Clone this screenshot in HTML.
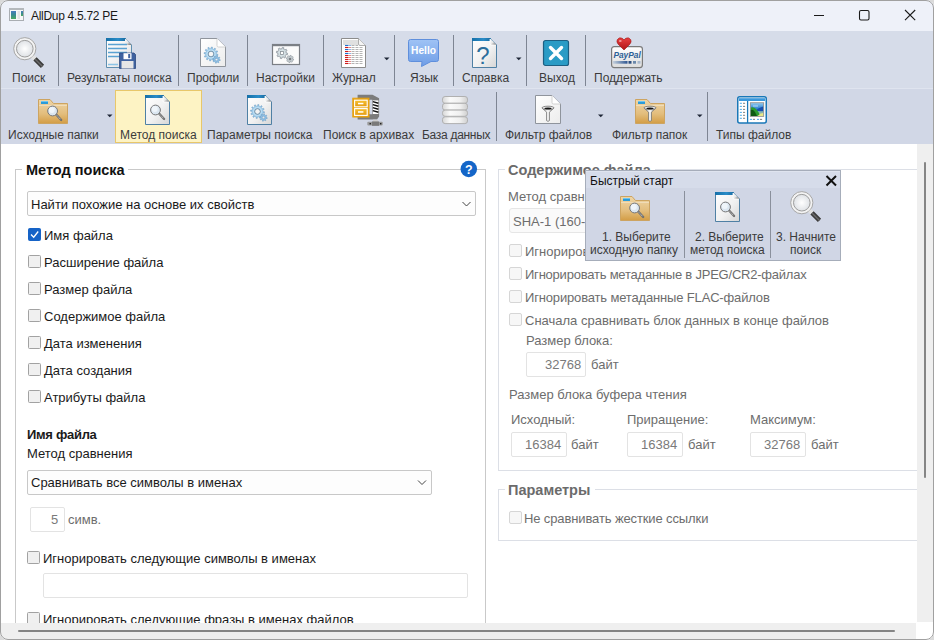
<!DOCTYPE html>
<html><head><meta charset="utf-8">
<style>
*{box-sizing:border-box;margin:0;padding:0}
html,body{width:934px;height:640px;overflow:hidden;background:#dadada}
body{font-family:"Liberation Sans",sans-serif;font-size:12px;color:#1a1a1a;position:relative}
.a{position:absolute}
.t{position:absolute;white-space:nowrap;line-height:1}
#win{position:absolute;left:0;top:0;width:934px;height:640px;border-radius:8px;overflow:hidden;background:#fff}
#frame{position:absolute;left:0;top:0;width:934px;height:640px;border:1px solid #a0a0a0;border-radius:8px;pointer-events:none}
#title{position:absolute;left:0;top:0;width:934px;height:31px;background:#eef1f9}
#tb1{position:absolute;left:0;top:31px;width:934px;height:57px;background:#d6dce9}
#tbline{position:absolute;left:0;top:88px;width:934px;height:1px;background:#dfe4ef}
#tb2{position:absolute;left:0;top:89px;width:934px;height:55px;background:#d1d7e6}
.sep{position:absolute;width:1px;background:#7e8593}
.tbt{position:absolute;white-space:nowrap;line-height:1;font-size:12px;color:#3b3b3b}
.dd{position:absolute;width:0;height:0;border-left:3px solid transparent;border-right:3px solid transparent;border-top:3px solid #333}
.ct{position:absolute;white-space:nowrap;line-height:1;font-size:13px;color:#1a1a1a}
.gt{position:absolute;white-space:nowrap;line-height:1;font-size:13px;color:#6d6d6d}
.cb{position:absolute;width:13px;height:13px;border:1px solid #a2a2a2;border-radius:1.5px;background:#f0f0f0}
.cbd{position:absolute;width:13px;height:13px;border:1px solid #d6d6d6;border-radius:2px;background:#f7f7f7}
.combo{position:absolute;border:1px solid #c8c8c8;border-radius:2px;background:#fdfdfd}
.combod{position:absolute;border:1px solid #e6e6e6;border-radius:3px;background:#fafafa}
.inp{position:absolute;border:1px solid #e3e3e3;border-radius:2px;background:#fff}
</style></head><body>
<div id="win">
 <div id="title"></div>
 <div id="tb1"></div>
 <div id="tbline"></div>
 <div id="tb2"></div>

 <!-- title -->
 <div class="t" style="left:31px;top:10px;font-size:12px;color:#1a1a1a;letter-spacing:-0.3px">AllDup 4.5.72 PE</div>

 <!-- toolbar row 1 separators -->
 <div class="sep" style="left:58px;top:35px;height:51px"></div>
 <div class="sep" style="left:178px;top:35px;height:51px"></div>
 <div class="sep" style="left:247px;top:35px;height:51px"></div>
 <div class="sep" style="left:323px;top:35px;height:51px"></div>
 <div class="sep" style="left:394px;top:35px;height:51px"></div>
 <div class="sep" style="left:453px;top:35px;height:51px"></div>
 <div class="sep" style="left:526px;top:35px;height:51px"></div>
 <div class="sep" style="left:585px;top:35px;height:51px"></div>

 <div class="tbt" style="left:12px;top:72px">Поиск</div>
 <div class="tbt" style="left:67px;top:72px">Результаты поиска</div>
 <div class="tbt" style="left:187px;top:72px">Профили</div>
 <div class="tbt" style="left:256px;top:72px">Настройки</div>
 <div class="tbt" style="left:332px;top:72px">Журнал</div>
 <div class="tbt" style="left:410px;top:72px">Язык</div>
 <div class="tbt" style="left:462px;top:72px">Справка</div>
 <div class="tbt" style="left:539px;top:72px">Выход</div>
 <div class="tbt" style="left:594px;top:72px">Поддержать</div>

 <!-- toolbar row 2 -->
 <div class="a" style="left:115px;top:90px;width:87px;height:53px;background:#fdf3c4;border:1px solid #e8c76a"></div>
 <div class="sep" style="left:496px;top:92px;height:49px"></div>
 <div class="sep" style="left:707px;top:92px;height:49px"></div>

 <div class="tbt" style="left:8px;top:129px">Исходные папки</div>
 <div class="tbt" style="left:120px;top:129px">Метод поиска</div>
 <div class="tbt" style="left:207px;top:129px">Параметры поиска</div>
 <div class="tbt" style="left:323px;top:129px">Поиск в архивах</div>
 <div class="tbt" style="left:422px;top:129px;letter-spacing:-0.3px">База данных</div>
 <div class="tbt" style="left:505px;top:129px">Фильтр файлов</div>
 <div class="tbt" style="left:612px;top:129px">Фильтр папок</div>
 <div class="tbt" style="left:716px;top:129px">Типы файлов</div>

 <!-- content -->
 <div id="content" class="a" style="left:0;top:144px;width:934px;height:496px;background:#fff"></div>

 <!-- left group -->
 <div class="a" style="left:15px;top:169px;width:471px;height:470px;border:1px solid #c9c9c9;border-bottom:none"></div>
 <div class="a" style="left:22px;top:160px;width:106px;height:18px;background:#fff"></div>
 <div class="t" style="left:26px;top:163px;font-size:14.5px;font-weight:bold;color:#111">Метод поиска</div>

 <div class="combo" style="left:27px;top:191px;width:449px;height:25px"></div>
 <div class="ct" style="left:31px;top:198px">Найти похожие на основе их свойств</div>

 <div class="cb" style="left:28px;top:228px;background:#1663c7;border-color:#1663c7"></div>
 <div class="ct" style="left:44px;top:229px">Имя файла</div>
 <div class="cb" style="left:28px;top:255px"></div>
 <div class="ct" style="left:44px;top:256px">Расширение файла</div>
 <div class="cb" style="left:28px;top:282px"></div>
 <div class="ct" style="left:44px;top:283px">Размер файла</div>
 <div class="cb" style="left:28px;top:309px"></div>
 <div class="ct" style="left:44px;top:310px">Содержимое файла</div>
 <div class="cb" style="left:28px;top:336px"></div>
 <div class="ct" style="left:44px;top:337px">Дата изменения</div>
 <div class="cb" style="left:28px;top:363px"></div>
 <div class="ct" style="left:44px;top:364px">Дата создания</div>
 <div class="cb" style="left:28px;top:390px"></div>
 <div class="ct" style="left:44px;top:391px">Атрибуты файла</div>

 <div class="ct" style="left:27px;top:428px;font-weight:bold;letter-spacing:-0.3px">Имя файла</div>
 <div class="ct" style="left:27px;top:447px">Метод сравнения</div>
 <div class="combo" style="left:27px;top:470px;width:405px;height:25px"></div>
 <div class="ct" style="left:31px;top:476px">Сравнивать все символы в именах</div>
 <div class="inp" style="left:30px;top:507px;width:35px;height:25px"></div>
 <div class="gt" style="left:51px;top:513px;color:#7a7a7a">5</div>
 <div class="gt" style="left:68px;top:513px">симв.</div>

 <div class="cb" style="left:27px;top:551px"></div>
 <div class="ct" style="left:43px;top:552px">Игнорировать следующие символы в именах</div>
 <div class="inp" style="left:43px;top:573px;width:425px;height:25px"></div>
 <div class="cb" style="left:27px;top:612px"></div>
 <div class="ct" style="left:43px;top:613px">Игнорировать следующие фразы в именах файлов</div>

 <!-- right group -->
 <div class="a" style="left:498px;top:169px;width:430px;height:302px;border:1px solid #dcdfe6"></div>
 <div class="a" style="left:505px;top:160px;width:150px;height:18px;background:#fff"></div>
 <div class="t" style="left:508px;top:163px;font-size:14.5px;font-weight:bold;color:#6b6b6b">Содержимое файла</div>
 <div class="gt" style="left:508px;top:190px">Метод сравнения</div>
 <div class="combod" style="left:509px;top:208px;width:300px;height:25px"></div>
 <div class="gt" style="left:513px;top:215px">SHA-1 (160-бит)</div>
 <div class="cbd" style="left:509px;top:244px"></div>
 <div class="gt" style="left:525px;top:245px">Игнорировать ID3-теги в MP3-файлах</div>
 <div class="cbd" style="left:509px;top:267px"></div>
 <div class="gt" style="left:525px;top:268px;letter-spacing:-0.22px">Игнорировать метаданные в JPEG/CR2-файлах</div>
 <div class="cbd" style="left:509px;top:290px"></div>
 <div class="gt" style="left:525px;top:291px;letter-spacing:-0.16px">Игнорировать метаданные FLAC-файлов</div>
 <div class="cbd" style="left:509px;top:313px"></div>
 <div class="gt" style="left:525px;top:314px">Сначала сравнивать блок данных в конце файлов</div>
 <div class="gt" style="left:526px;top:334px">Размер блока:</div>
 <div class="inp" style="left:526px;top:352px;width:60px;height:25px"></div>
 <div class="gt" style="left:545px;top:358px;color:#7a7a7a">32768</div>
 <div class="gt" style="left:591px;top:358px">байт</div>
 <div class="gt" style="left:509px;top:388px">Размер блока буфера чтения</div>
 <div class="gt" style="left:511px;top:413px">Исходный:</div>
 <div class="gt" style="left:627px;top:413px">Приращение:</div>
 <div class="gt" style="left:750px;top:413px">Максимум:</div>
 <div class="inp" style="left:511px;top:432px;width:56px;height:25px"></div>
 <div class="gt" style="left:525px;top:438px;color:#7a7a7a">16384</div>
 <div class="gt" style="left:571px;top:438px">байт</div>
 <div class="inp" style="left:627px;top:432px;width:56px;height:25px"></div>
 <div class="gt" style="left:641px;top:438px;color:#7a7a7a">16384</div>
 <div class="gt" style="left:688px;top:438px">байт</div>
 <div class="inp" style="left:750px;top:432px;width:56px;height:25px"></div>
 <div class="gt" style="left:764px;top:438px;color:#7a7a7a">32768</div>
 <div class="gt" style="left:811px;top:438px">байт</div>

 <div class="a" style="left:498px;top:489px;width:430px;height:52px;border:1px solid #dcdfe6"></div>
 <div class="a" style="left:505px;top:480px;width:90px;height:18px;background:#fff"></div>
 <div class="t" style="left:508px;top:483px;font-size:14.5px;font-weight:bold;color:#6b6b6b">Параметры</div>
 <div class="cbd" style="left:509px;top:511px"></div>
 <div class="gt" style="left:524px;top:512px;letter-spacing:-0.12px">Не сравнивать жесткие ссылки</div>

 <!-- scrollbars -->
 <div class="a" style="left:917px;top:144px;width:17px;height:478px;background:#efefef"></div>
 <div class="a" style="left:924px;top:162px;width:2px;height:316px;background:#858585;border-radius:1px"></div>
 <div class="a" style="left:0;top:623px;width:916px;height:17px;background:#efefef"></div>
 <div class="a" style="left:18px;top:630px;width:877px;height:2px;background:#858585;border-radius:1px"></div>

<svg class="a" style="left:0;top:0" width="934" height="640">
<defs>
 <radialGradient id="lensG" cx="0.5" cy="0.5" r="0.5"><stop offset="0" stop-color="#ffffff"/><stop offset="1" stop-color="#dfe2e6"/></radialGradient>
 <linearGradient id="handleG" x1="0" y1="0" x2="1" y2="0"><stop offset="0" stop-color="#2e2e2e"/><stop offset="0.5" stop-color="#6a6a6a"/><stop offset="1" stop-color="#2e2e2e"/></linearGradient>
 <linearGradient id="docG" x1="0" y1="0" x2="1" y2="1"><stop offset="0" stop-color="#ffffff"/><stop offset="0.55" stop-color="#f1f1f1"/><stop offset="1" stop-color="#d6d6d6"/></linearGradient>
 <linearGradient id="docW" x1="0" y1="0" x2="1" y2="1"><stop offset="0" stop-color="#ffffff"/><stop offset="1" stop-color="#ececec"/></linearGradient>
 <linearGradient id="barG" x1="0" y1="0" x2="1" y2="0"><stop offset="0" stop-color="#1670a8"/><stop offset="0.6" stop-color="#2a8cc8"/><stop offset="1" stop-color="#1a6aa0"/></linearGradient>
 <linearGradient id="foldG" x1="0" y1="0" x2="1" y2="1"><stop offset="0" stop-color="#ffffff"/><stop offset="0.5" stop-color="#e8e8e8"/><stop offset="1" stop-color="#5a5a5a"/></linearGradient>
 <linearGradient id="folderG" x1="0" y1="0" x2="0" y2="1"><stop offset="0" stop-color="#eed6a8"/><stop offset="0.6" stop-color="#e3bd7c"/><stop offset="1" stop-color="#d39d45"/></linearGradient>
 <linearGradient id="helloG" x1="0" y1="0" x2="0" y2="1"><stop offset="0" stop-color="#9fc3f5"/><stop offset="1" stop-color="#6e9de6"/></linearGradient>
 <linearGradient id="cardG" x1="0" y1="0" x2="0" y2="1"><stop offset="0" stop-color="#ffffff"/><stop offset="1" stop-color="#dcdcdc"/></linearGradient>
 <linearGradient id="pillG" x1="0" y1="0" x2="1" y2="0"><stop offset="0" stop-color="#d8d8d8"/><stop offset="0.3" stop-color="#fafafa"/><stop offset="0.7" stop-color="#f0f0f0"/><stop offset="1" stop-color="#d0d0d0"/></linearGradient>
 <linearGradient id="funG" x1="0" y1="0" x2="1" y2="0"><stop offset="0" stop-color="#9a9a9a"/><stop offset="0.5" stop-color="#ffffff"/><stop offset="1" stop-color="#8a8a8a"/></linearGradient>
 <linearGradient id="drawerG" x1="0" y1="0" x2="0" y2="1"><stop offset="0" stop-color="#f7c232"/><stop offset="1" stop-color="#e39a12"/></linearGradient>
 <linearGradient id="landG" x1="0" y1="0" x2="0" y2="1"><stop offset="0" stop-color="#8cc8f0"/><stop offset="0.45" stop-color="#2a7fd0"/><stop offset="1" stop-color="#e8e890"/></linearGradient>

 <g id="bigmag">
  <circle cx="11.8" cy="11.7" r="11.1" fill="#f3f3f3" stroke="#a6a6a6" stroke-width="1"/>
  <circle cx="11.8" cy="11.7" r="8.3" fill="url(#lensG)" stroke="#9d9d9d" stroke-width="1"/>
  <line x1="19.6" y1="19.5" x2="22.2" y2="22.1" stroke="#e2e2e2" stroke-width="4.4"/>
  <line x1="22" y1="21.9" x2="29.5" y2="29.4" stroke="#3c3c3c" stroke-width="4.6" stroke-linecap="butt"/>
  <line x1="22" y1="21.9" x2="29.5" y2="29.4" stroke="#6a6a6a" stroke-width="1.4"/>
 </g>

 <g id="smallmag">
  <line x1="3.8" y1="3.8" x2="8.6" y2="9" stroke="#6f6f6f" stroke-width="2.3" stroke-linecap="round"/>
  <line x1="4.4" y1="4.5" x2="8.2" y2="8.6" stroke="#f2f2f2" stroke-width="0.9" stroke-dasharray="0.9 0.9"/>
  <circle cx="0" cy="0" r="4.9" fill="#dbe6f0" stroke="#777777" stroke-width="1"/>
  <circle cx="-0.8" cy="-1" r="3" fill="#f2f7fb" opacity="0.85"/>
 </g>
 <g id="docblue">
  <path d="M0.5,0.5 H18 L24.5,7 V29.5 H0.5 Z" fill="url(#docG)" stroke="#4f80a4" stroke-width="1"/>
  <path d="M0.5,0.5 H18 L20.5,3 H0.5 Z" fill="url(#barG)"/>
  <rect x="0" y="0" width="19" height="3" fill="url(#barG)"/>
  <path d="M18,0.5 L24.5,7 H19.5 Q18,7 18,5.5 Z" fill="url(#foldG)"/>
  <path d="M18,1 L18,6 Q18,7 19,7 L24,7" fill="none" stroke="#ffffff" stroke-width="0.8"/>
 </g>

 <g id="docgray">
  <path d="M0.5,0.5 H17 L25.5,9 V28.5 H0.5 Z" fill="url(#docW)" stroke="#8f949c" stroke-width="1"/>
  <path d="M17,0.5 V7.5 Q17,9 18.5,9 H25.5" fill="#ffffff" stroke="#c8c8c8" stroke-width="0.8"/>
 </g>

 <g id="folder">
  <path d="M0.5,0.5 H12 L15.5,4.5 H29.5 V24.5 H0.5 Z" fill="url(#folderG)" stroke="#cda461" stroke-width="1"/>
  <line x1="1" y1="6.5" x2="29" y2="6.5" stroke="#f0dcb8" stroke-width="1"/>
  <rect x="3" y="2" width="7" height="3" fill="#2b9bd8"/>
  <rect x="3" y="2" width="7" height="1" fill="#6cc4f0"/>
 </g>

 <radialGradient id="gearG" cx="0.5" cy="0.5" r="0.5"><stop offset="0.3" stop-color="#e4f4fd"/><stop offset="0.7" stop-color="#a6d3f0"/><stop offset="1" stop-color="#78acd6"/></radialGradient>
 <g id="gear">
  <path d="M5.40,0.00 L6.99,0.29 L6.83,1.53 L5.22,1.40 L4.99,2.07 L4.68,2.70 L5.91,3.75 L5.15,4.74 L3.82,3.82 L3.29,4.28 L2.70,4.68 L3.24,6.20 L2.09,6.68 L1.40,5.22 L0.70,5.35 L0.00,5.40 L-0.29,6.99 L-1.53,6.83 L-1.40,5.22 L-2.07,4.99 L-2.70,4.68 L-3.75,5.91 L-4.74,5.15 L-3.82,3.82 L-4.28,3.29 L-4.68,2.70 L-6.20,3.24 L-6.68,2.09 L-5.22,1.40 L-5.35,0.70 L-5.40,0.00 L-6.99,-0.29 L-6.83,-1.53 L-5.22,-1.40 L-4.99,-2.07 L-4.68,-2.70 L-5.91,-3.75 L-5.15,-4.74 L-3.82,-3.82 L-3.29,-4.28 L-2.70,-4.68 L-3.24,-6.20 L-2.09,-6.68 L-1.40,-5.22 L-0.70,-5.35 L-0.00,-5.40 L0.29,-6.99 L1.53,-6.83 L1.40,-5.22 L2.07,-4.99 L2.70,-4.68 L3.75,-5.91 L4.74,-5.15 L3.82,-3.82 L4.28,-3.29 L4.68,-2.70 L6.20,-3.24 L6.68,-2.09 L5.22,-1.40 L5.35,-0.70 Z M2.80,0.00 A2.8,2.8 0 1,0 -2.80,0.00 A2.8,2.8 0 1,0 2.80,0.00 Z" fill="url(#gearG)" fill-rule="evenodd" stroke="#7aa6c8" stroke-width="0.5"/>
  <circle cx="0" cy="0" r="2.9" fill="none" stroke="#5f7f98" stroke-width="0.7"/>
 </g>
 <g id="gearsm">
  <path d="M2.80,0.00 L3.79,0.24 L3.60,1.23 L2.59,1.07 L2.33,1.56 L1.98,1.98 L2.51,2.85 L1.67,3.41 L1.07,2.59 L0.55,2.75 L0.00,2.80 L-0.24,3.79 L-1.23,3.60 L-1.07,2.59 L-1.56,2.33 L-1.98,1.98 L-2.85,2.51 L-3.41,1.67 L-2.59,1.07 L-2.75,0.55 L-2.80,0.00 L-3.79,-0.24 L-3.60,-1.23 L-2.59,-1.07 L-2.33,-1.56 L-1.98,-1.98 L-2.51,-2.85 L-1.67,-3.41 L-1.07,-2.59 L-0.55,-2.75 L-0.00,-2.80 L0.24,-3.79 L1.23,-3.60 L1.07,-2.59 L1.56,-2.33 L1.98,-1.98 L2.85,-2.51 L3.41,-1.67 L2.59,-1.07 L2.75,-0.55 Z M1.30,0.00 A1.3,1.3 0 1,0 -1.30,0.00 A1.3,1.3 0 1,0 1.30,0.00 Z" fill="#8ebfe4" fill-rule="evenodd" stroke="#6a9cc4" stroke-width="0.5"/>
 </g>
 <g id="funnel">
  <path d="M0,0.8 L4.6,5.2 V13.6 Q6,15.2 7.4,13.6 V5.2 L12,0.8 Z" fill="url(#funG)" stroke="#707070" stroke-width="0.8"/>
  <ellipse cx="6" cy="0.9" rx="6" ry="1.7" fill="#f4f4f4" stroke="#6a6a6a" stroke-width="0.8"/>
  <ellipse cx="6" cy="1.3" rx="3.6" ry="0.9" fill="#151515"/>
 </g>
</defs>

<!-- title icon -->
<linearGradient id="tiG" x1="0" y1="0" x2="0" y2="1"><stop offset="0" stop-color="#4a7cc0"/><stop offset="0.45" stop-color="#3a8a94"/><stop offset="1" stop-color="#4aa860"/></linearGradient>
<rect x="9.5" y="8.5" width="14" height="12" fill="#f8f8f8" stroke="#a9adb2" stroke-width="1"/>
<rect x="9" y="8" width="15" height="2" fill="#b4b8bc"/>
<rect x="11" y="11" width="5" height="8" fill="url(#tiG)"/>
<rect x="17.5" y="11" width="2.5" height="8" fill="#e4e4e4"/>
<rect x="21" y="11" width="2" height="5" fill="url(#tiG)"/>

<!-- window controls -->
<line x1="814" y1="15.5" x2="824" y2="15.5" stroke="#1a1a1a" stroke-width="1.1"/>
<rect x="859.5" y="10.5" width="9.5" height="9.5" rx="1.5" fill="none" stroke="#1a1a1a" stroke-width="1.1"/>
<path d="M905,10 L915.2,20.2 M915.2,10 L905,20.2" stroke="#1a1a1a" stroke-width="1.1"/>

<!-- toolbar row 1 icons -->
<use href="#bigmag" transform="translate(13,37)"/>

<g transform="translate(106,38)">
 <path d="M0.5,0.5 H19 L25.5,7 V29.5 H0.5 Z" fill="url(#docG)" stroke="#5f8fb0" stroke-width="1"/>
 <rect x="0" y="0" width="20" height="3" fill="url(#barG)"/>
 <path d="M19,0.5 L25.5,7 H20.5 Q19,7 19,5.5 Z" fill="url(#foldG)"/>
 <g stroke="#5aa2d2" stroke-width="1.3">
  <line x1="2" y1="6.5" x2="21" y2="6.5"/><line x1="2" y1="10.5" x2="21" y2="10.5"/><line x1="2" y1="14.5" x2="21" y2="14.5"/><line x1="2" y1="18.5" x2="14" y2="18.5"/><line x1="2" y1="26.5" x2="12" y2="26.5" stroke="#8cc4e6"/>
 </g>
 <path d="M13.5,15 H28 L29.5,16.5 V30.5 H13.5 Z" fill="#3f62a0" stroke="#2d4a80" stroke-width="0.8"/>
 <rect x="17.5" y="15.2" width="8" height="6" fill="#ffffff"/>
 <rect x="22.2" y="16" width="2" height="4.2" fill="#3f62a0"/>
 <rect x="15.5" y="23" width="12" height="7.5" fill="#e6e6e6"/>
</g>

<g transform="translate(200,38)">
 <use href="#docgray"/>
 <use href="#gear" transform="translate(11,16)"/>
 <use href="#gearsm" transform="translate(16.5,21.5)"/>
</g>

<g transform="translate(272,44)">
 <rect x="0.5" y="0.5" width="27" height="20" fill="#fbfbfb" stroke="#7b7f85" stroke-width="1.2"/>
 <rect x="0" y="0" width="28" height="2.2" fill="#7b7f85"/>
 <path transform="translate(10,9)" d="M4.20,0.00 L5.59,0.35 L5.30,1.81 L3.88,1.61 L3.49,2.33 L2.97,2.97 L3.70,4.20 L2.46,5.03 L1.61,3.88 L0.82,4.12 L0.00,4.20 L-0.35,5.59 L-1.81,5.30 L-1.61,3.88 L-2.33,3.49 L-2.97,2.97 L-4.20,3.70 L-5.03,2.46 L-3.88,1.61 L-4.12,0.82 L-4.20,0.00 L-5.59,-0.35 L-5.30,-1.81 L-3.88,-1.61 L-3.49,-2.33 L-2.97,-2.97 L-3.70,-4.20 L-2.46,-5.03 L-1.61,-3.88 L-0.82,-4.12 L-0.00,-4.20 L0.35,-5.59 L1.81,-5.30 L1.61,-3.88 L2.33,-3.49 L2.97,-2.97 L4.20,-3.70 L5.03,-2.46 L3.88,-1.61 L4.12,-0.82 Z M1.60,0.00 A1.6,1.6 0 1,0 -1.60,0.00 A1.6,1.6 0 1,0 1.60,0.00 Z" fill="#d5e0e4" fill-rule="evenodd" stroke="#9299a0" stroke-width="0.9"/>
 <rect x="8.6" y="7.6" width="2.8" height="2.8" fill="#ffffff" stroke="#8a9298" stroke-width="0.7"/>
 <path transform="translate(18,15)" d="M2.70,0.00 L3.59,0.23 L3.41,1.17 L2.49,1.03 L2.24,1.50 L1.91,1.91 L2.38,2.70 L1.58,3.23 L1.03,2.49 L0.53,2.65 L0.00,2.70 L-0.23,3.59 L-1.17,3.41 L-1.03,2.49 L-1.50,2.24 L-1.91,1.91 L-2.70,2.38 L-3.23,1.58 L-2.49,1.03 L-2.65,0.53 L-2.70,0.00 L-3.59,-0.23 L-3.41,-1.17 L-2.49,-1.03 L-2.24,-1.50 L-1.91,-1.91 L-2.38,-2.70 L-1.58,-3.23 L-1.03,-2.49 L-0.53,-2.65 L-0.00,-2.70 L0.23,-3.59 L1.17,-3.41 L1.03,-2.49 L1.50,-2.24 L1.91,-1.91 L2.70,-2.38 L3.23,-1.58 L2.49,-1.03 L2.65,-0.53 Z M1.20,0.00 A1.2,1.2 0 1,0 -1.20,0.00 A1.2,1.2 0 1,0 1.20,0.00 Z" fill="#d0d8dc" fill-rule="evenodd" stroke="#9299a0" stroke-width="0.8"/>

<rect x="17" y="14" width="2" height="2" fill="#7b7f85"/>
</g>

<g transform="translate(341,38)">
 <path d="M0.5,0.5 H17.5 L24.5,7.5 V29.5 H0.5 Z" fill="#ffffff" stroke="#8c8c8c" stroke-width="1"/>
 <rect x="2" y="2" width="15" height="5" fill="#e0e0e0"/>
 <path d="M17.5,0.5 V6 Q17.5,7.5 19,7.5 H24.5" fill="#f4f4f4" stroke="#9a9a9a" stroke-width="0.8"/>
 <g stroke-width="1.1">
  <line x1="4" y1="7.5" x2="7.5" y2="7.5" stroke="#1f6fd0"/><line x1="8.5" y1="7.5" x2="9.5" y2="7.5" stroke="#1f6fd0"/>
  <line x1="4" y1="9.5" x2="7.5" y2="9.5" stroke="#d01a1a"/><line x1="8.5" y1="9.5" x2="9.5" y2="9.5" stroke="#d01a1a"/>
  <line x1="4" y1="11.5" x2="7.5" y2="11.5" stroke="#1f6fd0"/><line x1="8.5" y1="11.5" x2="9.5" y2="11.5" stroke="#1f6fd0"/>
  <line x1="4" y1="13.5" x2="7.5" y2="13.5" stroke="#d01a1a"/><line x1="8.5" y1="13.5" x2="9.5" y2="13.5" stroke="#d01a1a"/>
  <line x1="4" y1="15.5" x2="7.5" y2="15.5" stroke="#1f6fd0"/><line x1="8.5" y1="15.5" x2="9.5" y2="15.5" stroke="#1f6fd0"/>
  <line x1="4" y1="17.5" x2="7.5" y2="17.5" stroke="#d01a1a"/><line x1="8.5" y1="17.5" x2="9.5" y2="17.5" stroke="#d01a1a"/>
  <line x1="4" y1="19.5" x2="7.5" y2="19.5" stroke="#d01a1a"/><line x1="8.5" y1="19.5" x2="9.5" y2="19.5" stroke="#d01a1a"/>
  <line x1="4" y1="21.5" x2="7.5" y2="21.5" stroke="#d01a1a"/><line x1="8.5" y1="21.5" x2="9.5" y2="21.5" stroke="#d01a1a"/>
  <line x1="4" y1="23.5" x2="7.5" y2="23.5" stroke="#d01a1a"/><line x1="8.5" y1="23.5" x2="9.5" y2="23.5" stroke="#d01a1a"/>
  <line x1="4" y1="25.5" x2="7.5" y2="25.5" stroke="#d01a1a"/><line x1="8.5" y1="25.5" x2="9.5" y2="25.5" stroke="#d01a1a"/>
 </g>
 <g stroke="#b4b4b4" stroke-width="1.1" stroke-dasharray="3 1">
  <line x1="10.5" y1="7.5" x2="17" y2="7.5"/><line x1="10.5" y1="9.5" x2="22" y2="9.5"/><line x1="10.5" y1="11.5" x2="22" y2="11.5"/><line x1="10.5" y1="13.5" x2="22" y2="13.5"/><line x1="10.5" y1="15.5" x2="22" y2="15.5"/><line x1="10.5" y1="17.5" x2="22" y2="17.5"/><line x1="10.5" y1="19.5" x2="22" y2="19.5"/><line x1="10.5" y1="21.5" x2="22" y2="21.5"/><line x1="10.5" y1="23.5" x2="22" y2="23.5"/><line x1="10.5" y1="25.5" x2="22" y2="25.5"/>
 </g>
</g>
<path d="M384,57.5 H389.5 L386.75,60.3 Z" fill="#1e2636"/>

<g transform="translate(408,39)">
 <path d="M2.5,0.5 H28.5 Q30.5,0.5 30.5,2.5 V20.5 Q30.5,22.5 28.5,22.5 H23 L13.5,27.5 L14,22.5 H2.5 Q0.5,22.5 0.5,20.5 V2.5 Q0.5,0.5 2.5,0.5 Z" fill="url(#helloG)" stroke="#5f8fdc" stroke-width="1"/>
 <text x="15.5" y="15.2" text-anchor="middle" font-family="Liberation Sans" font-weight="bold" font-size="10.2" fill="#ffffff">Hello</text>
</g>

<g transform="translate(472,38)">
 <use href="#docblue"/>
 <text x="11" y="26" text-anchor="middle" font-family="Liberation Sans" font-size="24" fill="#2b6e9c">?</text>
</g>
<path d="M516,57.5 H521.5 L518.75,60.3 Z" fill="#1e2636"/>

<g transform="translate(543,40)">
 <rect x="0.5" y="0.5" width="25" height="25" rx="2" fill="#2a9bc5" stroke="#1d5f82" stroke-width="1.2"/>
 <path d="M7.5,7.5 L18.5,18.5 M18.5,7.5 L7.5,18.5" stroke="#ffffff" stroke-width="3.4" stroke-linecap="round"/>
</g>

<g transform="translate(611,46)">
 <rect x="0.6" y="0.6" width="30.8" height="21" rx="2.5" fill="url(#cardG)" stroke="#7a7a7a" stroke-width="1.2"/>
 <text x="2.4" y="11.9" textLength="27.4" lengthAdjust="spacingAndGlyphs" font-family="Liberation Sans" font-weight="bold" font-style="italic" font-size="9.6" fill="#2d5f96">PayPal</text>
 <rect x="2" y="15" width="14.5" height="2.7" fill="url(#ppbar)"/>
 <rect x="17.5" y="15" width="3" height="2.7" fill="#2d4f80"/>
 <rect x="22" y="15" width="3" height="2.7" fill="#6a88aa"/>
 <rect x="26.5" y="15" width="3" height="2.7" fill="#a8b8cc"/>
</g>
<linearGradient id="ppbar" x1="0" y1="0" x2="1" y2="0"><stop offset="0" stop-color="#c5d0dc"/><stop offset="1" stop-color="#2d5590"/></linearGradient>
<linearGradient id="heartG" x1="0" y1="0" x2="0" y2="1"><stop offset="0" stop-color="#e84040"/><stop offset="1" stop-color="#b01515"/></linearGradient>
<path d="M624,50 L618,44 Q616.3,41.8 617.2,39.8 Q619.2,36.8 622,38.2 Q623.3,38.9 624,40 Q624.7,38.9 626,38.2 Q628.8,36.8 630.8,39.8 Q631.7,41.8 630,44 Z" fill="url(#heartG)" stroke="#a01010" stroke-width="0.6"/>
<ellipse cx="620.3" cy="41" rx="1.4" ry="1.1" fill="#f39a9a"/>

<!-- toolbar row 2 icons -->
<g transform="translate(38,99)">
 <use href="#folder"/>
 <use href="#smallmag" transform="translate(14.6,12)"/>
</g>
<path d="M107,114.5 H112.5 L109.75,117.3 Z" fill="#1e2636"/>

<g transform="translate(145,95)">
 <use href="#docblue"/>
 <use href="#smallmag" transform="translate(10.5,15)"/>
</g>

<g transform="translate(247,95)">
 <use href="#docblue"/>
 <use href="#gear" transform="translate(10.5,16.5)"/>
 <use href="#gearsm" transform="translate(16.5,22.5)"/>
</g>

<g transform="translate(352,95)">
 <path d="M5.6,-0.3 H20.5 L27.1,3.2 V21.5 L25,24.6 H5.6 V19.3 H20.3 V4.8 H5.6 Z" fill="#7c7c7c"/>
 <rect x="20.8" y="5.4" width="5.6" height="13.6" fill="#ffffff"/>
 <g stroke="#111" stroke-width="1.5"><line x1="20.8" y1="6.6" x2="26.4" y2="8.2"/><line x1="20.8" y1="9.6" x2="26.4" y2="11.2"/><line x1="20.8" y1="12.6" x2="26.4" y2="14.2"/><line x1="20.8" y1="15.6" x2="26.4" y2="17.2"/></g>
 <line x1="5.6" y1="4.3" x2="18" y2="4.3" stroke="#4f80d2" stroke-width="1"/>
 <line x1="5.6" y1="19.8" x2="18" y2="19.8" stroke="#4f80d2" stroke-width="1"/>
 <rect x="0.8" y="3.2" width="16.2" height="18.8" fill="#e9a412" stroke="#e6a010" stroke-width="1"/>
 <rect x="2.6" y="5.2" width="12.6" height="6.6" fill="url(#drawerG)" stroke="#ffffff" stroke-width="1.1"/>
 <rect x="2.6" y="13.6" width="12.6" height="6.8" fill="url(#drawerG)" stroke="#ffffff" stroke-width="1.1"/>
 <rect x="6" y="7.8" width="5.4" height="1.5" fill="#ffffff"/>
 <rect x="6" y="16.2" width="5.4" height="1.5" fill="#ffffff"/>
 <rect x="21" y="24.6" width="5" height="2.2" fill="#cfcfcf"/>
 <rect x="15.3" y="26.7" width="15.4" height="3.9" rx="1" fill="#9a9a9a"/>
 <rect x="20" y="26.5" width="7" height="4.3" fill="#7a7a7a"/>
 <rect x="17.5" y="28" width="1.4" height="1.4" fill="#222"/>
 <rect x="28" y="28" width="1.4" height="1.4" fill="#222"/>
</g>

<g transform="translate(442,96)">
 <rect x="0.5" y="0.5" width="25" height="6.8" rx="2.6" fill="url(#pillG)" stroke="#b0b0b0" stroke-width="1"/>
 <rect x="0.5" y="7.3" width="25" height="6.8" rx="2.6" fill="url(#pillG)" stroke="#b0b0b0" stroke-width="1"/>
 <rect x="0.5" y="14.1" width="25" height="6.2" rx="2.6" fill="url(#pillG)" stroke="#b0b0b0" stroke-width="1"/>
 <rect x="0.5" y="20.8" width="25" height="6.8" rx="2.6" fill="url(#pillG)" stroke="#b0b0b0" stroke-width="1"/>
</g>

<g transform="translate(535,95)">
 <use href="#docgray"/>
 <use href="#funnel" transform="translate(7,12)"/>
</g>
<path d="M598,114.5 H603.5 L600.75,117.3 Z" fill="#1e2636"/>

<g transform="translate(635,99)">
 <use href="#folder"/>
 <use href="#funnel" transform="translate(9,8)"/>
</g>
<path d="M697,114.5 H702.5 L699.75,117.3 Z" fill="#1e2636"/>

<g transform="translate(737,96)">
 <rect x="0.75" y="0.75" width="28.5" height="26.3" rx="2" fill="#ffffff" stroke="#1a78b8" stroke-width="1.5"/>
 <rect x="2" y="2.2" width="26" height="2.8" fill="#3a98dc"/>
 <line x1="10.6" y1="5" x2="10.6" y2="27" stroke="#1a78b8" stroke-width="1.3"/>
 <g stroke-width="1.1"><g stroke="#5ab0e8"><line x1="2.8" y1="7.3" x2="4.9" y2="7.3"/><line x1="2.8" y1="10.4" x2="4.9" y2="10.4"/><line x1="2.8" y1="13.4" x2="4.9" y2="13.4"/><line x1="2.8" y1="16.4" x2="4.9" y2="16.4"/><line x1="2.8" y1="19.3" x2="4.9" y2="19.3"/><line x1="2.8" y1="22.3" x2="4.9" y2="22.3"/></g>
 <g stroke="#8a8a8a"><line x1="6" y1="7.3" x2="8.1" y2="7.3"/><line x1="6" y1="10.4" x2="8.1" y2="10.4"/><line x1="6" y1="13.4" x2="8.1" y2="13.4"/><line x1="6" y1="16.4" x2="8.1" y2="16.4"/><line x1="6" y1="19.3" x2="8.1" y2="19.3"/><line x1="6" y1="22.3" x2="8.1" y2="22.3"/></g></g>
 <rect x="12.9" y="6.2" width="14.2" height="14.7" fill="#9a9a9a"/>
 <rect x="13.9" y="7.2" width="12.2" height="12.7" fill="url(#landG)"/>
 <rect x="16" y="9.5" width="5" height="1" fill="#cfeaff" opacity="0.8"/>
 <path d="M19,14 Q22,11.5 26.1,10.5 V15 H19 Z" fill="#1a4fb0"/>
 <path d="M13.9,11.5 Q16.5,10.5 19,13 Q21.5,15.5 23.5,19.9 H13.9 Z" fill="#2a9a30"/>
 <path d="M13.9,14 Q16,13 18,16 L20,19.9 H13.9 Z" fill="#0e5a12"/>
 <path d="M20.5,19.9 Q23,17.5 26.1,17 V19.9 Z" fill="#e8e888"/>
 <g stroke-width="1.1"><line x1="12.9" y1="23.4" x2="15" y2="23.4" stroke="#5ab0e8"/><line x1="15.9" y1="23.4" x2="18" y2="23.4" stroke="#8a8a8a"/><line x1="20" y1="23.4" x2="22.1" y2="23.4" stroke="#5ab0e8"/><line x1="23" y1="23.4" x2="25.1" y2="23.4" stroke="#8a8a8a"/></g>
</g>

<!-- help circle -->
<circle cx="468.8" cy="169" r="8.3" fill="#1466c8"/>
<text x="468.8" y="173.8" text-anchor="middle" font-family="Liberation Sans" font-weight="bold" font-size="12.5" fill="#ffffff">?</text>

<!-- checkmark -->
<path d="M31,234.5 L33.7,237.2 L38.2,231.5" fill="none" stroke="#ffffff" stroke-width="1.3"/>

<!-- combo chevrons -->
<path d="M462.5,202 L466.5,206 L470.5,202" fill="none" stroke="#444" stroke-width="1"/>
<path d="M418,480.5 L422,484.5 L426,480.5" fill="none" stroke="#444" stroke-width="1"/>
</svg>
 <!-- quick start popup -->
 <div class="a" style="left:585px;top:170px;width:256px;height:91px;background:#d0d6e5;border:1px solid #a6adba"></div>
 <div class="a" style="left:586px;top:171px;width:254px;height:17px;background:#d6dcea;border-top:1px solid #dfe4ef"></div>
 <div class="t" style="left:590px;top:175px;font-size:12px;color:#111">Быстрый старт</div>
 <div class="sep" style="left:684px;top:191px;height:67px;background:#8a909c"></div>
 <div class="sep" style="left:770px;top:191px;height:67px;background:#8a909c"></div>
 <div class="tbt" style="left:602px;top:231px;color:#3b3b3b">1. Выберите</div>
 <div class="tbt" style="left:590px;top:244px;color:#3b3b3b">исходную папку</div>
 <div class="tbt" style="left:695px;top:231px;color:#3b3b3b">2. Выберите</div>
 <div class="tbt" style="left:690px;top:244px;color:#3b3b3b">метод поиска</div>
 <div class="tbt" style="left:776px;top:231px;color:#3b3b3b">3. Начните</div>
 <div class="tbt" style="left:790px;top:244px;color:#3b3b3b">поиск</div>
 <svg class="a" style="left:0;top:0" width="934" height="640">
  <g transform="translate(620,196)"><use href="#folder"/><use href="#smallmag" transform="translate(14.6,12)"/></g>
  <g transform="translate(715,192)"><use href="#docblue"/><use href="#smallmag" transform="translate(10.5,15)"/></g>
  <use href="#bigmag" transform="translate(790,191)"/>
  <path d="M826.5,176 L836,185.5 M836,176 L826.5,185.5" stroke="#111" stroke-width="2"/>
 </svg>
</div>
<div id="frame"></div>
</body></html>
